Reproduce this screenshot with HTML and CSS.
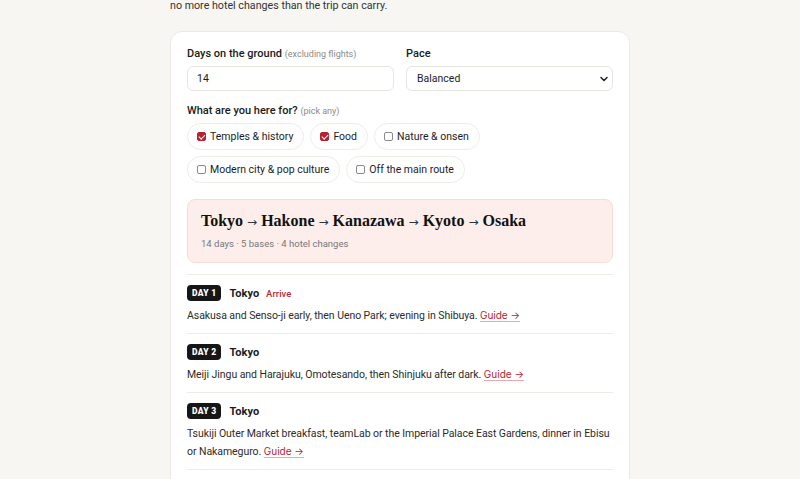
FILE: index.html
```html
<!DOCTYPE html>
<html lang="en">
<head>
<meta charset="utf-8">
<title>Japan itinerary</title>
<link rel="stylesheet" href="styles.css">
</head>
<body>
<main class="page">
  <p class="intro">no more hotel changes than the trip can carry.</p>
  <section class="card">
    <div class="fields">
      <label class="field">
        <span class="label">Days on the ground <small>(excluding flights)</small></span>
        <input class="input" type="text" value="14">
      </label>
      <label class="field">
        <span class="label">Pace</span>
        <span class="select">
          <span>Balanced</span>
          <svg class="chev" width="8" height="6" viewBox="0 0 8 6"><path d="M1 1.5 L4 4.5 L7 1.5" fill="none" stroke="#222" stroke-width="1.5" stroke-linecap="round" stroke-linejoin="round"/></svg>
        </span>
      </label>
    </div>
    <div class="label interests-label">What are you here for? <small>(pick any)</small></div>
    <div class="chips">
      <span class="chip"><span class="box checked"></span>Temples &amp; history</span>
      <span class="chip"><span class="box checked"></span>Food</span>
      <span class="chip"><span class="box"></span>Nature &amp; onsen</span>
      <span class="chip"><span class="box"></span>Modern city &amp; pop culture</span>
      <span class="chip"><span class="box"></span>Off the main route</span>
    </div>
    <div class="route">
      <h2 class="route-title">Tokyo <span class="arr">→</span> Hakone <span class="arr">→</span> Kanazawa <span class="arr">→</span> Kyoto <span class="arr">→</span> Osaka</h2>
      <p class="route-meta">14 days · 5 bases · 4 hotel changes</p>
    </div>
    <ol class="days">
      <li class="day">
        <div class="day-head"><span class="badge">DAY 1</span><span class="city">Tokyo</span><span class="tag">Arrive</span></div>
        <p class="desc">Asakusa and Senso-ji early, then Ueno Park; evening in Shibuya. <a class="guide" href="#">Guide →</a></p>
      </li>
      <li class="day">
        <div class="day-head"><span class="badge">DAY 2</span><span class="city">Tokyo</span></div>
        <p class="desc">Meiji Jingu and Harajuku, Omotesando, then Shinjuku after dark. <a class="guide" href="#">Guide →</a></p>
      </li>
      <li class="day">
        <div class="day-head"><span class="badge">DAY 3</span><span class="city">Tokyo</span></div>
        <p class="desc">Tsukiji Outer Market breakfast, teamLab or the Imperial Palace East Gardens, dinner in Ebisu or Nakameguro. <a class="guide" href="#">Guide →</a></p>
      </li>
    </ol>
  </section>
</main>
</body>
</html>
```
FILE: styles.css
```css
* { box-sizing: border-box; }
html, body { margin: 0; padding: 0; }
body {
  background: #f7f6f2;
  font-family: Roboto, "Liberation Sans", sans-serif;
  color: #1d1d1f;
  font-size: 10.5px;
}
.page {
  width: 460px;
  margin: 0 auto;
}
.intro {
  margin: -3px 0 0;
  font-size: 10.7px;
  line-height: 18px;
  color: #333;
}
.card {
  margin-top: 16px;
  background: #fff;
  border: 1px solid #ece9e3;
  border-radius: 12px;
  padding: 15px 16px 24px;
}
.fields {
  display: grid;
  grid-template-columns: 1fr 1fr;
  gap: 12px;
}
.field { display: flex; flex-direction: column; }
.label {
  font-size: 11px;
  font-weight: 500;
  line-height: 14px;
  color: #1a1a1a;
}
.label small {
  font-size: 9px;
  font-weight: 400;
  color: #8a8a8a;
}
.input, .select {
  margin-top: 5px;
  height: 25px;
  border: 1px solid #e8e6e1;
  border-radius: 6px;
  background: #fff;
  font: inherit;
  font-size: 10.5px;
  padding: 0 9px;
  color: #1d1d1f;
  outline: none;
  width: 100%;
}
.select {
  display: flex;
  align-items: center;
  justify-content: space-between;
  padding: 0 4px 0 10px;
}
.chev { display: block; }
.interests-label { margin-top: 13px; }
.chips {
  display: flex;
  flex-wrap: wrap;
  gap: 6px;
  margin-top: 5px;
}
.chip {
  display: inline-flex;
  align-items: center;
  gap: 4px;
  height: 27px;
  padding: 0 10px 0 9px;
  border: 1px solid #efece7;
  border-radius: 999px;
  font-size: 10.5px;
  color: #1d1d1f;
}
.box {
  width: 9px;
  height: 9px;
  border: 1px solid #8a8a8a;
  border-radius: 2px;
  background: #fff;
  position: relative;
}
.box.checked {
  background: #b8222e;
  border-color: #b8222e;
}
.box.checked::after {
  content: "";
  position: absolute;
  left: 2px;
  top: 0px;
  width: 2.5px;
  height: 5px;
  border: solid #fff;
  border-width: 0 1.3px 1.3px 0;
  transform: rotate(45deg);
}
.route {
  margin-top: 16px;
  background: #fdeeec;
  border: 1px solid #f6dcd9;
  border-radius: 8px;
  padding: 11px 13px 12px;
}
.route-title {
  margin: 0;
  font-family: "Liberation Serif", serif;
  font-weight: 700;
  font-size: 16px;
  line-height: 19px;
  color: #111;
}
.route-title .arr {
  font-family: "DejaVu Sans", sans-serif;
  font-weight: 400;
  font-size: 12px;
  color: #333;
}
.route-meta {
  margin: 6px 0 0;
  font-size: 9.5px;
  color: #777;
  line-height: 12px;
}
.days {
  list-style: none;
  margin: 11px 0 0;
  padding: 0;
  border-bottom: 1px solid #eeebe6;
}
.day {
  border-top: 1px solid #eeebe6;
  padding: 10px 0 8px;
}
.day-head {
  display: flex;
  align-items: center;
  gap: 8px;
}
.badge {
  background: #161616;
  color: #fff;
  font-size: 8.5px;
  font-weight: 900;
  letter-spacing: 0.3px;
  height: 16px;
  line-height: 16px;
  padding: 0 5px;
  border-radius: 4px;
}
.city {
  font-size: 11px;
  font-weight: 700;
}
.tag {
  font-size: 9.5px;
  font-weight: 500;
  color: #b8303c;
  margin-left: -1px;
}
.desc {
  margin: 6px 0 0;
  font-size: 10.5px;
  line-height: 18px;
  letter-spacing: -0.06px;
  color: #2b2b2b;
}
.guide {
  font-family: Inter, "DejaVu Sans", sans-serif;
  font-size: 10px;
  line-height: 1;
  letter-spacing: 0;
  color: #b8222e;
  text-decoration: underline;
  text-decoration-color: #e4a9ae;
  text-underline-offset: 2px;
}
```
